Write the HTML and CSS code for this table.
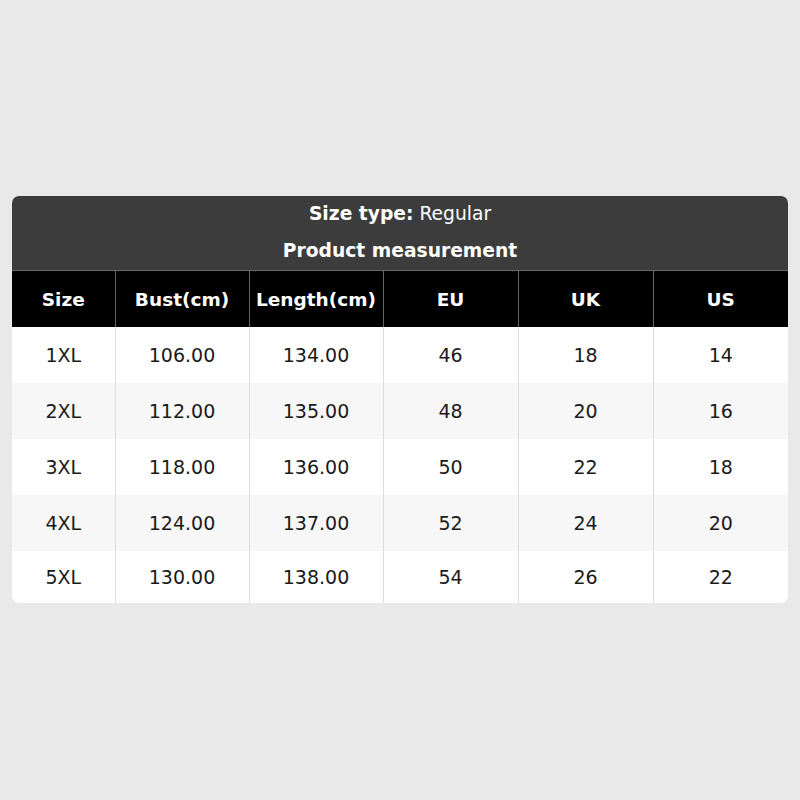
FILE: index.html
```html
<!DOCTYPE html>
<html>
<head>
<meta charset="utf-8">
<link rel="stylesheet" href="styles.css">
</head>
<body>
<div class="page">
  <div class="card">
    <div class="title">
      <div class="title-line"><b>Size type:</b> Regular</div>
      <div class="title-line"><b>Product measurement</b></div>
    </div>
    <table class="chart">
      <colgroup>
        <col class="c1"><col class="c2"><col class="c2"><col class="c3"><col class="c3"><col class="c3">
      </colgroup>
      <thead>
        <tr><th>Size</th><th>Bust(cm)</th><th>Length(cm)</th><th>EU</th><th>UK</th><th>US</th></tr>
      </thead>
      <tbody>
        <tr><td>1XL</td><td>106.00</td><td>134.00</td><td>46</td><td>18</td><td>14</td></tr>
        <tr><td>2XL</td><td>112.00</td><td>135.00</td><td>48</td><td>20</td><td>16</td></tr>
        <tr><td>3XL</td><td>118.00</td><td>136.00</td><td>50</td><td>22</td><td>18</td></tr>
        <tr><td>4XL</td><td>124.00</td><td>137.00</td><td>52</td><td>24</td><td>20</td></tr>
        <tr class="last"><td>5XL</td><td>130.00</td><td>138.00</td><td>54</td><td>26</td><td>22</td></tr>
      </tbody>
    </table>
  </div>
</div>
</body>
</html>
```

FILE: styles.css
```css
html, body {
  margin: 0;
  padding: 0;
  background: #e9e9e9;
  font-family: "DejaVu Sans", sans-serif;
}
.page {
  width: 800px;
  height: 800px;
  padding: 196px 12px 0 12px;
  box-sizing: border-box;
}
.card {
  width: 776px;
  border-radius: 7px;
  overflow: hidden;
  background: #fff;
}
.title {
  background: #3c3c3c;
  color: #fff;
  text-align: center;
  font-size: 18.7px;
}
.title-line {
  height: 37px;
  line-height: 35px;
}
.title-line:last-child {
  line-height: 36px;
}
.title b { font-weight: bold; }
.chart {
  width: 776px;
  border-collapse: collapse;
  table-layout: fixed;
  font-size: 19px;
}
.c1 { width: 103px; }
.c2 { width: 134px; }
.c3 { width: 135px; }
.chart th {
  background: #000;
  color: #fff;
  font-weight: bold;
  font-size: 18.5px;
  height: 56px;
  padding: 0;
  text-align: center;
  border-left: 1px solid #666;
  border-top: 1px solid #666;
}
.chart td {
  height: 56px;
  padding: 0;
  text-align: center;
  color: #1a1a1a;
  border-left: 1px solid #dcdcdc;
}
.chart th:first-child, .chart td:first-child { border-left: none; }
.chart tbody tr:nth-child(even) td { background: #f7f7f7; }
.chart tbody tr.last td { height: 52px; }
```
